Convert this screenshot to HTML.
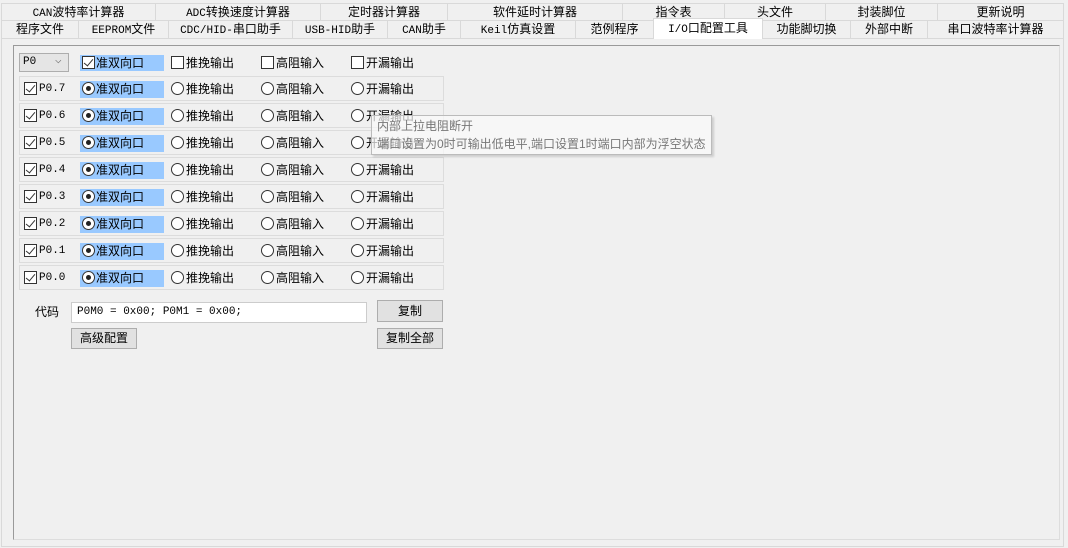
<!DOCTYPE html><html><head><style>
*{box-sizing:border-box;margin:0;padding:0}
body{width:1068px;height:548px;background:#f0f0f0;font:12px "Liberation Sans","Noto Sans CJK SC",sans-serif;color:#000;position:relative;overflow:hidden}
.a{position:absolute}
.t{position:absolute;border:1px solid #d9d9d9;border-bottom:none;background:#f0f0f0;text-align:center;line-height:17px;white-space:nowrap}
.m{font-family:"Liberation Mono","Noto Sans CJK SC",monospace;font-size:11px}
.row{position:absolute;left:19px;width:425px;height:25px;border:1px solid #dcdcdc;background:#f0f0f0}
.cb{position:absolute;width:13px;height:13px;border:1px solid #333;background:#fff}
.cb.k::after{content:"";position:absolute;left:3px;top:0px;width:4px;height:8px;border:solid #333;border-width:0 1.5px 1.5px 0;transform:rotate(40deg)}
.rd{position:absolute;width:13px;height:13px;border:1px solid #333;border-radius:50%;background:#fff}
.rd.k::after{content:"";position:absolute;left:3px;top:3px;width:5px;height:5px;border-radius:50%;background:#222}
.lb{position:absolute;line-height:15px}
.btn{position:absolute;border:1px solid #adadad;background:#e1e1e1;text-align:center;line-height:18px}
</style></head><body>
<div class="t" style="left:1px;top:3px;width:155px;height:17px"><span class="m">CAN</span>波特率计算器</div>
<div class="t" style="left:155px;top:3px;width:166px;height:17px"><span class="m">ADC</span>转换速度计算器</div>
<div class="t" style="left:320px;top:3px;width:128px;height:17px">定时器计算器</div>
<div class="t" style="left:447px;top:3px;width:176px;height:17px">软件延时计算器</div>
<div class="t" style="left:622px;top:3px;width:103px;height:17px">指令表</div>
<div class="t" style="left:724px;top:3px;width:102px;height:17px">头文件</div>
<div class="t" style="left:825px;top:3px;width:113px;height:17px">封装脚位</div>
<div class="t" style="left:937px;top:3px;width:127px;height:17px">更新说明</div>
<div class="t" style="left:1px;top:20px;width:78px;height:18px">程序文件</div>
<div class="t" style="left:78px;top:20px;width:91px;height:18px"><span class="m">EEPROM</span>文件</div>
<div class="t" style="left:168px;top:20px;width:125px;height:18px"><span class="m">CDC/HID-</span>串口助手</div>
<div class="t" style="left:292px;top:20px;width:96px;height:18px"><span class="m">USB-HID</span>助手</div>
<div class="t" style="left:387px;top:20px;width:74px;height:18px"><span class="m">CAN</span>助手</div>
<div class="t" style="left:460px;top:20px;width:116px;height:18px"><span class="m">Keil</span>仿真设置</div>
<div class="t" style="left:575px;top:20px;width:79px;height:18px">范例程序</div>
<div class="t" style="left:762px;top:20px;width:89px;height:18px">功能脚切换</div>
<div class="t" style="left:850px;top:20px;width:78px;height:18px">外部中断</div>
<div class="t" style="left:927px;top:20px;width:137px;height:18px">串口波特率计算器</div>
<div class="a" style="left:1px;top:38px;width:1063px;height:509px;border:1px solid #d9d9d9;background:#f0f0f0"></div>
<div class="t" style="left:653px;top:18px;width:110px;height:21px;background:#fff;line-height:18px;z-index:2"><span class="m">I/O</span>口配置工具</div>
<div class="a" style="left:13px;top:45px;width:1047px;height:495px;border:1px solid #9a9a9a;border-right-color:#ddd;border-bottom-color:#ddd"></div>
<div class="a m" style="left:19px;top:53px;width:50px;height:19px;border:1px solid #adadad;background:#e5e5e5;line-height:17px;padding-left:3px">P0<span style="position:absolute;left:35px;top:-1px;color:#666">⌵</span></div>
<div class="a" style="left:80px;top:55px;width:84px;height:16px;background:#99c9ff"></div>
<div class="cb k" style="left:82px;top:56px"></div><div class="lb" style="left:96px;top:56px">准双向口</div>
<div class="cb" style="left:171px;top:56px"></div><div class="lb" style="left:186px;top:56px">推挽输出</div>
<div class="cb" style="left:261px;top:56px"></div><div class="lb" style="left:276px;top:56px">高阻输入</div>
<div class="cb" style="left:351px;top:56px"></div><div class="lb" style="left:366px;top:56px">开漏输出</div>
<div id="rows"></div>
<script>
var h='';for(var i=0;i<8;i++){var y=76+i*27,c=y+6;
h+='<div class="row" style="top:'+y+'px"></div>'+
'<div class="cb k" style="left:24px;top:'+c+'px"></div><div class="lb m" style="left:39px;top:'+(c)+'px">P0.'+(7-i)+'</div>'+
'<div class="a" style="left:80px;top:'+(c-1)+'px;width:84px;height:17px;background:#99c9ff"></div>'+
'<div class="rd k" style="left:82px;top:'+c+'px"></div><div class="lb" style="left:96px;top:'+c+'px">准双向口</div>'+
'<div class="rd" style="left:171px;top:'+c+'px"></div><div class="lb" style="left:186px;top:'+c+'px">推挽输出</div>'+
'<div class="rd" style="left:261px;top:'+c+'px"></div><div class="lb" style="left:276px;top:'+c+'px">高阻输入</div>'+
'<div class="rd" style="left:351px;top:'+c+'px"></div><div class="lb" style="left:366px;top:'+c+'px">开漏输出</div>';}
document.getElementById('rows').innerHTML=h;
</script>
<div class="lb" style="left:35px;top:305px">代码</div>
<div class="a m" style="left:71px;top:302px;width:296px;height:21px;background:#fff;border:1px solid #ccc;line-height:19px;padding-left:5px">P0M0 = 0x00; P0M1 = 0x00;</div>
<div class="btn" style="left:377px;top:300px;width:66px;height:22px;line-height:20px">复制</div>
<div class="btn" style="left:71px;top:328px;width:66px;height:21px">高级配置</div>
<div class="btn" style="left:377px;top:328px;width:66px;height:21px">复制全部</div>
<div class="a" style="left:371px;top:115px;width:341px;height:40px;border:1px solid #bbb;background:rgba(250,250,250,0.7);color:#777;line-height:18px;padding:1px 0 0 5px;box-shadow:2px 2px 2px rgba(0,0,0,.15)">内部上拉电阻断开<br>端口设置为0时可输出低电平,端口设置1时端口内部为浮空状态</div>
</body></html>
